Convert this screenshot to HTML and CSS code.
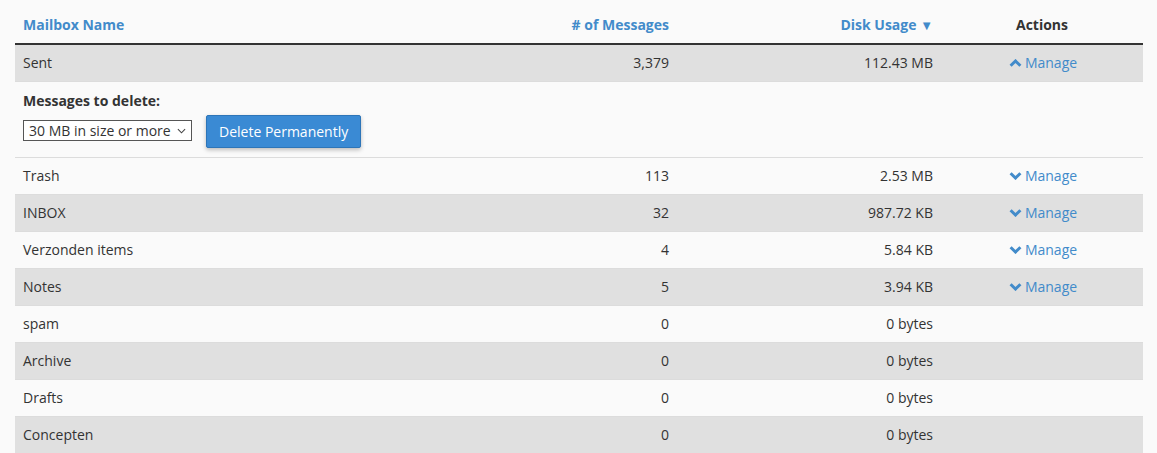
FILE: index.html
```html
<!DOCTYPE html>
<html lang="en">
<head>
  <meta charset="UTF-8">
  <title>Mailboxes</title>
  <link rel="stylesheet" href="styles.css">
</head>
<body>
  <table class="mailbox-table">
    <thead>
      <tr>
        <th class="col-name"><a href="#">Mailbox Name</a></th>
        <th class="col-num"><a href="#"># of Messages</a></th>
        <th class="col-num col-disk"><a href="#">Disk Usage <span class="sort">&#9660;</span></a></th>
        <th class="col-actions">Actions</th>
      </tr>
    </thead>
    <tbody>
      <tr class="stripe open">
        <td>Sent</td>
        <td class="num">3,379</td>
        <td class="num">112.43 MB</td>
        <td class="actions"><a href="#" class="manage"><svg class="chev" viewBox="0 0 13 8"><path d="M1.6 6.8 L6.5 2 L11.4 6.8" /></svg>Manage</a></td>
      </tr>
      <tr class="detail">
        <td colspan="4">
          <div class="delete-label">Messages to delete:</div>
          <div class="delete-row">
            <div class="select-wrap">
              <select class="size-select">
                <option>30 MB in size or more</option>
              </select>
              <svg class="select-arrow" viewBox="0 0 10 6"><path d="M1 1 L5 5 L9 1" /></svg>
            </div>
            <button class="btn-delete">Delete Permanently</button>
          </div>
        </td>
      </tr>
      <tr>
        <td>Trash</td>
        <td class="num">113</td>
        <td class="num">2.53 MB</td>
        <td class="actions"><a href="#" class="manage"><svg class="chev" viewBox="0 0 13 8"><path d="M1.6 1.2 L6.5 6 L11.4 1.2" /></svg>Manage</a></td>
      </tr>
      <tr class="stripe">
        <td>INBOX</td>
        <td class="num">32</td>
        <td class="num">987.72 KB</td>
        <td class="actions"><a href="#" class="manage"><svg class="chev" viewBox="0 0 13 8"><path d="M1.6 1.2 L6.5 6 L11.4 1.2" /></svg>Manage</a></td>
      </tr>
      <tr>
        <td>Verzonden items</td>
        <td class="num">4</td>
        <td class="num">5.84 KB</td>
        <td class="actions"><a href="#" class="manage"><svg class="chev" viewBox="0 0 13 8"><path d="M1.6 1.2 L6.5 6 L11.4 1.2" /></svg>Manage</a></td>
      </tr>
      <tr class="stripe">
        <td>Notes</td>
        <td class="num">5</td>
        <td class="num">3.94 KB</td>
        <td class="actions"><a href="#" class="manage"><svg class="chev" viewBox="0 0 13 8"><path d="M1.6 1.2 L6.5 6 L11.4 1.2" /></svg>Manage</a></td>
      </tr>
      <tr>
        <td>spam</td>
        <td class="num">0</td>
        <td class="num">0 bytes</td>
        <td class="actions"></td>
      </tr>
      <tr class="stripe">
        <td>Archive</td>
        <td class="num">0</td>
        <td class="num">0 bytes</td>
        <td class="actions"></td>
      </tr>
      <tr>
        <td>Drafts</td>
        <td class="num">0</td>
        <td class="num">0 bytes</td>
        <td class="actions"></td>
      </tr>
      <tr class="stripe">
        <td>Concepten</td>
        <td class="num">0</td>
        <td class="num">0 bytes</td>
        <td class="actions"></td>
      </tr>
    </tbody>
  </table>
</body>
</html>
```

FILE: styles.css
```css
body {
  margin: 0;
  padding: 0 14px 0 15px;
  background-color: #fafafa;
  color: #333;
  font-family: "Open Sans", Arial, sans-serif;
  font-size: 14px;
}

a {
  color: #428bca;
  text-decoration: none;
}

.mailbox-table {
  width: 100%;
  border-collapse: collapse;
  table-layout: fixed;
}

.mailbox-table th {
  padding: 15px 8px 8px;
  line-height: 20px;
  font-weight: bold;
  border-bottom: 2px solid #333;
  text-align: left;
}

.mailbox-table th a {
  color: #428bca;
}

.col-name {
  width: 389px;
}

.col-num {
  text-align: right !important;
}

.col-disk {
  width: 248px;
}

.col-actions {
  width: 186px;
  text-align: center !important;
  color: #333;
}

.sort {
  font-size: 13px;
}

.mailbox-table td {
  padding: 8px;
  line-height: 20px;
  height: 20px;
  border-top: 1px solid #dcdcdc;
}

.mailbox-table tbody tr:first-child td {
  border-top: none;
}

.stripe {
  background-color: #e0e0e0;
}

.num {
  text-align: right;
}

.actions {
  text-align: center;
}

.manage {
  display: inline-flex;
  align-items: center;
  vertical-align: top;
  height: 20px;
  gap: 3px;
  margin-left: 2px;
}

.chev {
  width: 13px;
  height: 8px;
  fill: none;
  stroke: #428bca;
  stroke-width: 3;
}

.detail td {
  padding: 9px 8px;
  height: auto;
}

.delete-label {
  font-weight: bold;
  line-height: 20px;
  margin-bottom: 4px;
}

.delete-row {
  display: flex;
  align-items: center;
  gap: 14px;
}

.select-wrap {
  position: relative;
  margin-top: -2px;
}

.size-select {
  display: block;
  width: 169px;
  height: 21px;
  font-family: "Open Sans", Arial, sans-serif;
  font-size: 14px;
  color: #333;
  background-color: #fff;
  border: 1px solid #555;
  border-radius: 0;
  padding: 0 2px 0 5px;
  appearance: none;
  -webkit-appearance: none;
}

.select-arrow {
  position: absolute;
  right: 6px;
  top: 8px;
  width: 9px;
  height: 6px;
  fill: none;
  stroke: #444;
  stroke-width: 1.2;
  pointer-events: none;
}

.btn-delete {
  height: 33px;
  padding: 5px 12px;
  font-family: "Open Sans", Arial, sans-serif;
  font-size: 14px;
  color: #fff;
  background-color: #3a8ad4;
  border: 1px solid #2d75b8;
  border-radius: 2px;
  box-shadow: 0 2px 4px rgba(0, 0, 0, 0.25);
  cursor: pointer;
}
```
